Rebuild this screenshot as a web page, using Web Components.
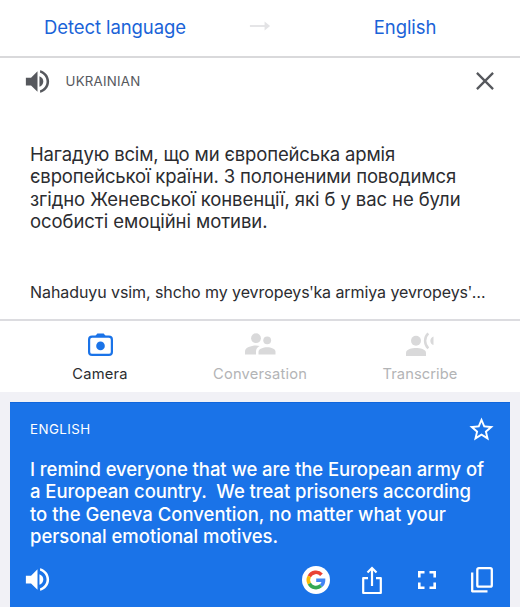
<!DOCTYPE html>
<html lang="en">
<head>
<meta charset="utf-8">
<title>Translate</title>
<style>
  body {
    margin: 0;
    background: #f1f1f6;
    font-family: Inter, "Liberation Sans", sans-serif;
    color: #2b2c30;
  }
</style>
</head>
<body>
<translate-app></translate-app>

<script>
const icons = {
  volume: '<path fill="currentColor" d="M3 9v6h4l5 5V4L7 9H3zm10.500-1.030v8.050A4.500 4.500 0 0 0 16.500 12c0-1.770-1.020-3.290-3-4.030zM14 3.230v2.060c2.890.860 5 3.540 5 6.710s-2.110 5.850-5 6.710v2.060c4.010-.910 7-4.490 7-8.770s-2.990-7.860-7-8.770z"/>',
  close: '<path fill="none" stroke="currentColor" stroke-width="2.500" d="M3.200 3.200 20.800 20.800M20.800 3.200 3.200 20.800"/>',
  arrow: '<path fill="none" stroke="currentColor" stroke-width="2" d="M1 12H19"/><path fill="currentColor" d="M17 7l6 5-6 5z"/>',
  star: '<path fill="currentColor" d="M22 9.240l-7.190-.620L12 2 9.190 8.630 2 9.240l5.460 4.730L5.820 21 12 17.270 18.180 21l-1.630-7.030L22 9.240zM12 15.400l-3.760 2.270 1-4.280-3.320-2.880 4.380-.380L12 6.100l1.710 4.040 4.380.380-3.320 2.880 1 4.280L12 15.400z"/>',
  camera: '<rect x="1.100" y="3.700" width="22.800" height="18.200" rx="3" fill="none" stroke="currentColor" stroke-width="2.200"/><path fill="currentColor" d="M7 3.500 9.300.500h6.400L18 3.500z"/><circle cx="12.500" cy="12.900" r="4.300" fill="currentColor"/>',
  conversation: '<g fill="currentColor"><circle cx="11" cy="5.200" r="4.900"/><path d="M0 21.500v-3.200C0 14.500 6 12.600 11 12.500c1.400 0 2.500.200 3.700.500-2.400 1.400-3.700 3-3.700 5.500v3z"/><circle cx="22.200" cy="7.300" r="3.900"/><path d="M13.500 21.500v-2.700c0-3 4.800-4.500 8.700-4.500s8.300 1.500 8.300 4.500v2.700z"/></g>',
  transcribe: '<g fill="currentColor"><circle cx="10" cy="8.800" r="5"/><path d="M0 24v-3.200C0 17.300 6 16 10 16s10 1.300 10 4.800V24z"/><path d="M27.500 4.500v8.600c-4.200-1.100-4.200-7.500 0-8.600z"/></g><path fill="none" stroke="currentColor" stroke-width="2.500" d="M22.300 1.300C18 5.300 18 12.300 22.300 16.300"/>',
  google: '<circle cx="14" cy="14" r="14" fill="#fff"/><g fill="none" stroke-width="3.600"><path stroke="#e94235" d="M7.300 10.300A7.600 7.600 0 0 1 19.500 8.700"/><path stroke="#fabb05" d="M7.300 17.700A7.600 7.600 0 0 1 7.300 10.300"/><path stroke="#34a853" d="M19 19.700A7.600 7.600 0 0 1 7.300 17.700"/><path stroke="#4285f4" d="M14.200 14.200H21.500C21.500 16.500 20.600 18.400 19 19.700"/></g>',
  share: '<path fill="none" stroke="currentColor" stroke-width="2.200" stroke-linejoin="round" d="M7 12.100H2.200V27H19.800V12.100H15M11 20V3"/><path fill="none" stroke="currentColor" stroke-width="2.200" d="M6.500 6.500 11 2l4.500 4.500"/>',
  expand: '<path fill="none" stroke="currentColor" stroke-width="2.600" d="M1.300 6.500V1.300H6.500M11.500 1.300H16.700V6.500M16.700 11.500V16.700H11.500M6.500 16.700H1.300V11.500"/>',
  copy: '<rect x="6.300" y="1.200" width="14.500" height="18.500" rx="1.500" fill="none" stroke="currentColor" stroke-width="2.300"/><path fill="none" stroke="currentColor" stroke-width="2.300" stroke-linejoin="round" d="M1.200 5.500V24.300H16.500"/>'
};

class AppIcon extends HTMLElement {
  connectedCallback() {
    this.attachShadow({ mode: 'open' });
    const w = this.getAttribute('w');
    const h = this.getAttribute('h') || w;
    const box = this.getAttribute('box') || '0 0 24 24';
    this.shadowRoot.innerHTML = `
      <style>
        :host { display: block; flex: none; width: ${w}px; height: ${h}px; }
        svg { display: block; width: 100%; height: 100%; overflow: visible; }
      </style>
      <svg viewBox="${box}" aria-hidden="true">${icons[this.getAttribute('name')]}</svg>`;
  }
}

// One line of text, tracked so that it fills the given measure
class TextLine extends HTMLElement {
  connectedCallback() {
    this.attachShadow({ mode: 'open' });
    // no whitespace around the slot: the host keeps spaces as they are
    this.shadowRoot.innerHTML =
      '<style>:host { display: block; width: max-content; white-space: pre; }</style><slot></slot>';
    const measure = Number(this.getAttribute('measure'));
    const natural = this.getBoundingClientRect().width;
    this.style.letterSpacing = `${(measure - natural) / this.textContent.length}px`;
  }
}

class LanguageBar extends HTMLElement {
  connectedCallback() {
    this.attachShadow({ mode: 'open' });
    this.shadowRoot.innerHTML = `
      <style>
        :host {
          display: grid;
          grid-template-columns: 230px 60px 230px;
          align-items: center;
          justify-items: center;
          box-sizing: border-box;
          height: 58px;
          padding-bottom: 3px;
          background: #fff;
          border-bottom: 2px solid #d9d9db;
          color: #1a63d8;
          font-size: 18.500px;
        }
        app-icon { color: #e3e3e5; margin-bottom: 1px; }
      </style>
      <text-line measure="142">Detect language</text-line>
      <app-icon name="arrow" w="22" h="22"></app-icon>
      <text-line measure="62.500">English</text-line>`;
  }
}

class SourcePanel extends HTMLElement {
  connectedCallback() {
    this.attachShadow({ mode: 'open' });
    this.shadowRoot.innerHTML = `
      <style>
        :host {
          display: flex;
          flex-direction: column;
          box-sizing: border-box;
          height: 263px;
          background: #fff;
          border-bottom: 2px solid #dcdce0;
        }
        header {
          display: flex;
          align-items: center;
          height: 46px;
          padding: 0 24px 0 22px;
          color: #56585d;
          font-size: 13.300px;
        }
        header text-line { margin-left: 12.500px; }
        .close { margin-left: auto; }
        .text {
          padding: 39px 30px 0;
          font-size: 18.500px;
          line-height: 22.300px;
        }
        .roman {
          margin-top: 48px;
          padding-left: 30px;
          font-size: 16px;
          line-height: 24px;
        }
      </style>
      <header>
        <app-icon name="volume" w="31"></app-icon>
        <text-line measure="75">UKRAINIAN</text-line>
        <app-icon class="close" name="close" w="22"></app-icon>
      </header>
      <div class="text">
        <text-line measure="365">Нагадую всім, що ми європейська армія</text-line>
        <text-line measure="426">європейської країни. З полоненими поводимся</text-line>
        <text-line measure="430.500">згідно Женевської конвенції, які б у вас не були</text-line>
        <text-line measure="237.500">особисті емоційні мотиви.</text-line>
      </div>
      <div class="roman">
        <text-line measure="455.500">Nahaduyu vsim, shcho my yevropeysʹka armiya yevropeysʹ…</text-line>
      </div>`;
  }
}

class ModeTab extends HTMLElement {
  connectedCallback() {
    this.attachShadow({ mode: 'open' });
    this.shadowRoot.innerHTML = `
      <style>
        :host {
          display: flex;
          flex-direction: column;
          align-items: center;
          width: 160px;
          color: #d9d9da;
          font-size: 14.700px;
          line-height: 20px;
        }
        :host([active]) { color: #1a73e8; }
        .icon { display: flex; align-items: center; height: 28px; }
        .label { margin-top: 6px; color: #b3b4b6; }
        :host([active]) .label { color: #2b2c30; }
      </style>
      <div class="icon"><slot name="icon"></slot></div>
      <div class="label"><slot></slot></div>`;
  }
}

class ModeTabs extends HTMLElement {
  connectedCallback() {
    this.attachShadow({ mode: 'open' });
    this.shadowRoot.innerHTML = `
      <style>
        :host {
          display: flex;
          justify-content: center;
          box-sizing: border-box;
          height: 71px;
          padding-top: 9px;
          background: #fff;
        }
      </style>
      <mode-tab active>
        <app-icon slot="icon" name="camera" w="25" h="23" box="0 0 25 23"></app-icon>
        <text-line measure="55.500">Camera</text-line>
      </mode-tab>
      <mode-tab>
        <app-icon slot="icon" name="conversation" w="30.500" h="21.500" box="0 0 30.500 21.500"></app-icon>
        <text-line measure="94">Conversation</text-line>
      </mode-tab>
      <mode-tab>
        <app-icon slot="icon" name="transcribe" w="27.500" h="24" box="0 0 27.500 24"></app-icon>
        <text-line measure="75">Transcribe</text-line>
      </mode-tab>`;
  }
}

class ResultCard extends HTMLElement {
  connectedCallback() {
    this.attachShadow({ mode: 'open' });
    this.shadowRoot.innerHTML = `
      <style>
        :host {
          display: flex;
          flex-direction: column;
          box-sizing: border-box;
          height: 205px;
          margin: 10px 10px 0;
          background: #1a73e8;
          border-top: 1px solid #1066dc;
          color: #fff;
        }
        header {
          display: flex;
          align-items: center;
          justify-content: space-between;
          height: 52px;
          padding: 0 14px 0 20px;
          font-size: 13.300px;
        }
        .text {
          padding: 3px 20px 0;
          font-size: 18.500px;
          font-weight: 500;
          line-height: 22.400px;
        }
        footer {
          display: flex;
          align-items: center;
          height: 34px;
          margin-top: 15px;
          padding: 0 17px 0 12px;
        }
        .actions {
          display: flex;
          align-items: center;
          margin-left: auto;
        }
        .share { margin-left: 31px; }
        .expand { margin-left: 35px; }
        .copy { margin-left: 35px; }
      </style>
      <header>
        <text-line measure="60.500">ENGLISH</text-line>
        <app-icon name="star" w="29"></app-icon>
      </header>
      <div class="text">
        <text-line measure="454">I remind everyone that we are the European army of</text-line>
        <text-line measure="441">a European country.  We treat prisoners according</text-line>
        <text-line measure="416">to the Geneva Convention, no matter what your</text-line>
        <text-line measure="248">personal emotional motives.</text-line>
      </div>
      <footer>
        <app-icon name="volume" w="31"></app-icon>
        <div class="actions">
          <app-icon name="google" w="28" box="0 0 28 28"></app-icon>
          <app-icon class="share" name="share" w="22" h="28" box="0 0 22 28"></app-icon>
          <app-icon class="expand" name="expand" w="18" box="0 0 18 18"></app-icon>
          <app-icon class="copy" name="copy" w="22" h="26" box="0 0 22 26"></app-icon>
        </div>
      </footer>`;
  }
}

class TranslateApp extends HTMLElement {
  connectedCallback() {
    this.attachShadow({ mode: 'open' });
    this.shadowRoot.innerHTML = `
      <style>
        :host { display: flex; flex-direction: column; width: 520px; height: 607px; overflow: hidden; }
      </style>
      <language-bar></language-bar>
      <source-panel></source-panel>
      <mode-tabs></mode-tabs>
      <result-card></result-card>`;
  }
}

customElements.define('app-icon', AppIcon);
customElements.define('text-line', TextLine);
customElements.define('mode-tab', ModeTab);
customElements.define('language-bar', LanguageBar);
customElements.define('source-panel', SourcePanel);
customElements.define('mode-tabs', ModeTabs);
customElements.define('result-card', ResultCard);
customElements.define('translate-app', TranslateApp);
</script>
</body>
</html>
